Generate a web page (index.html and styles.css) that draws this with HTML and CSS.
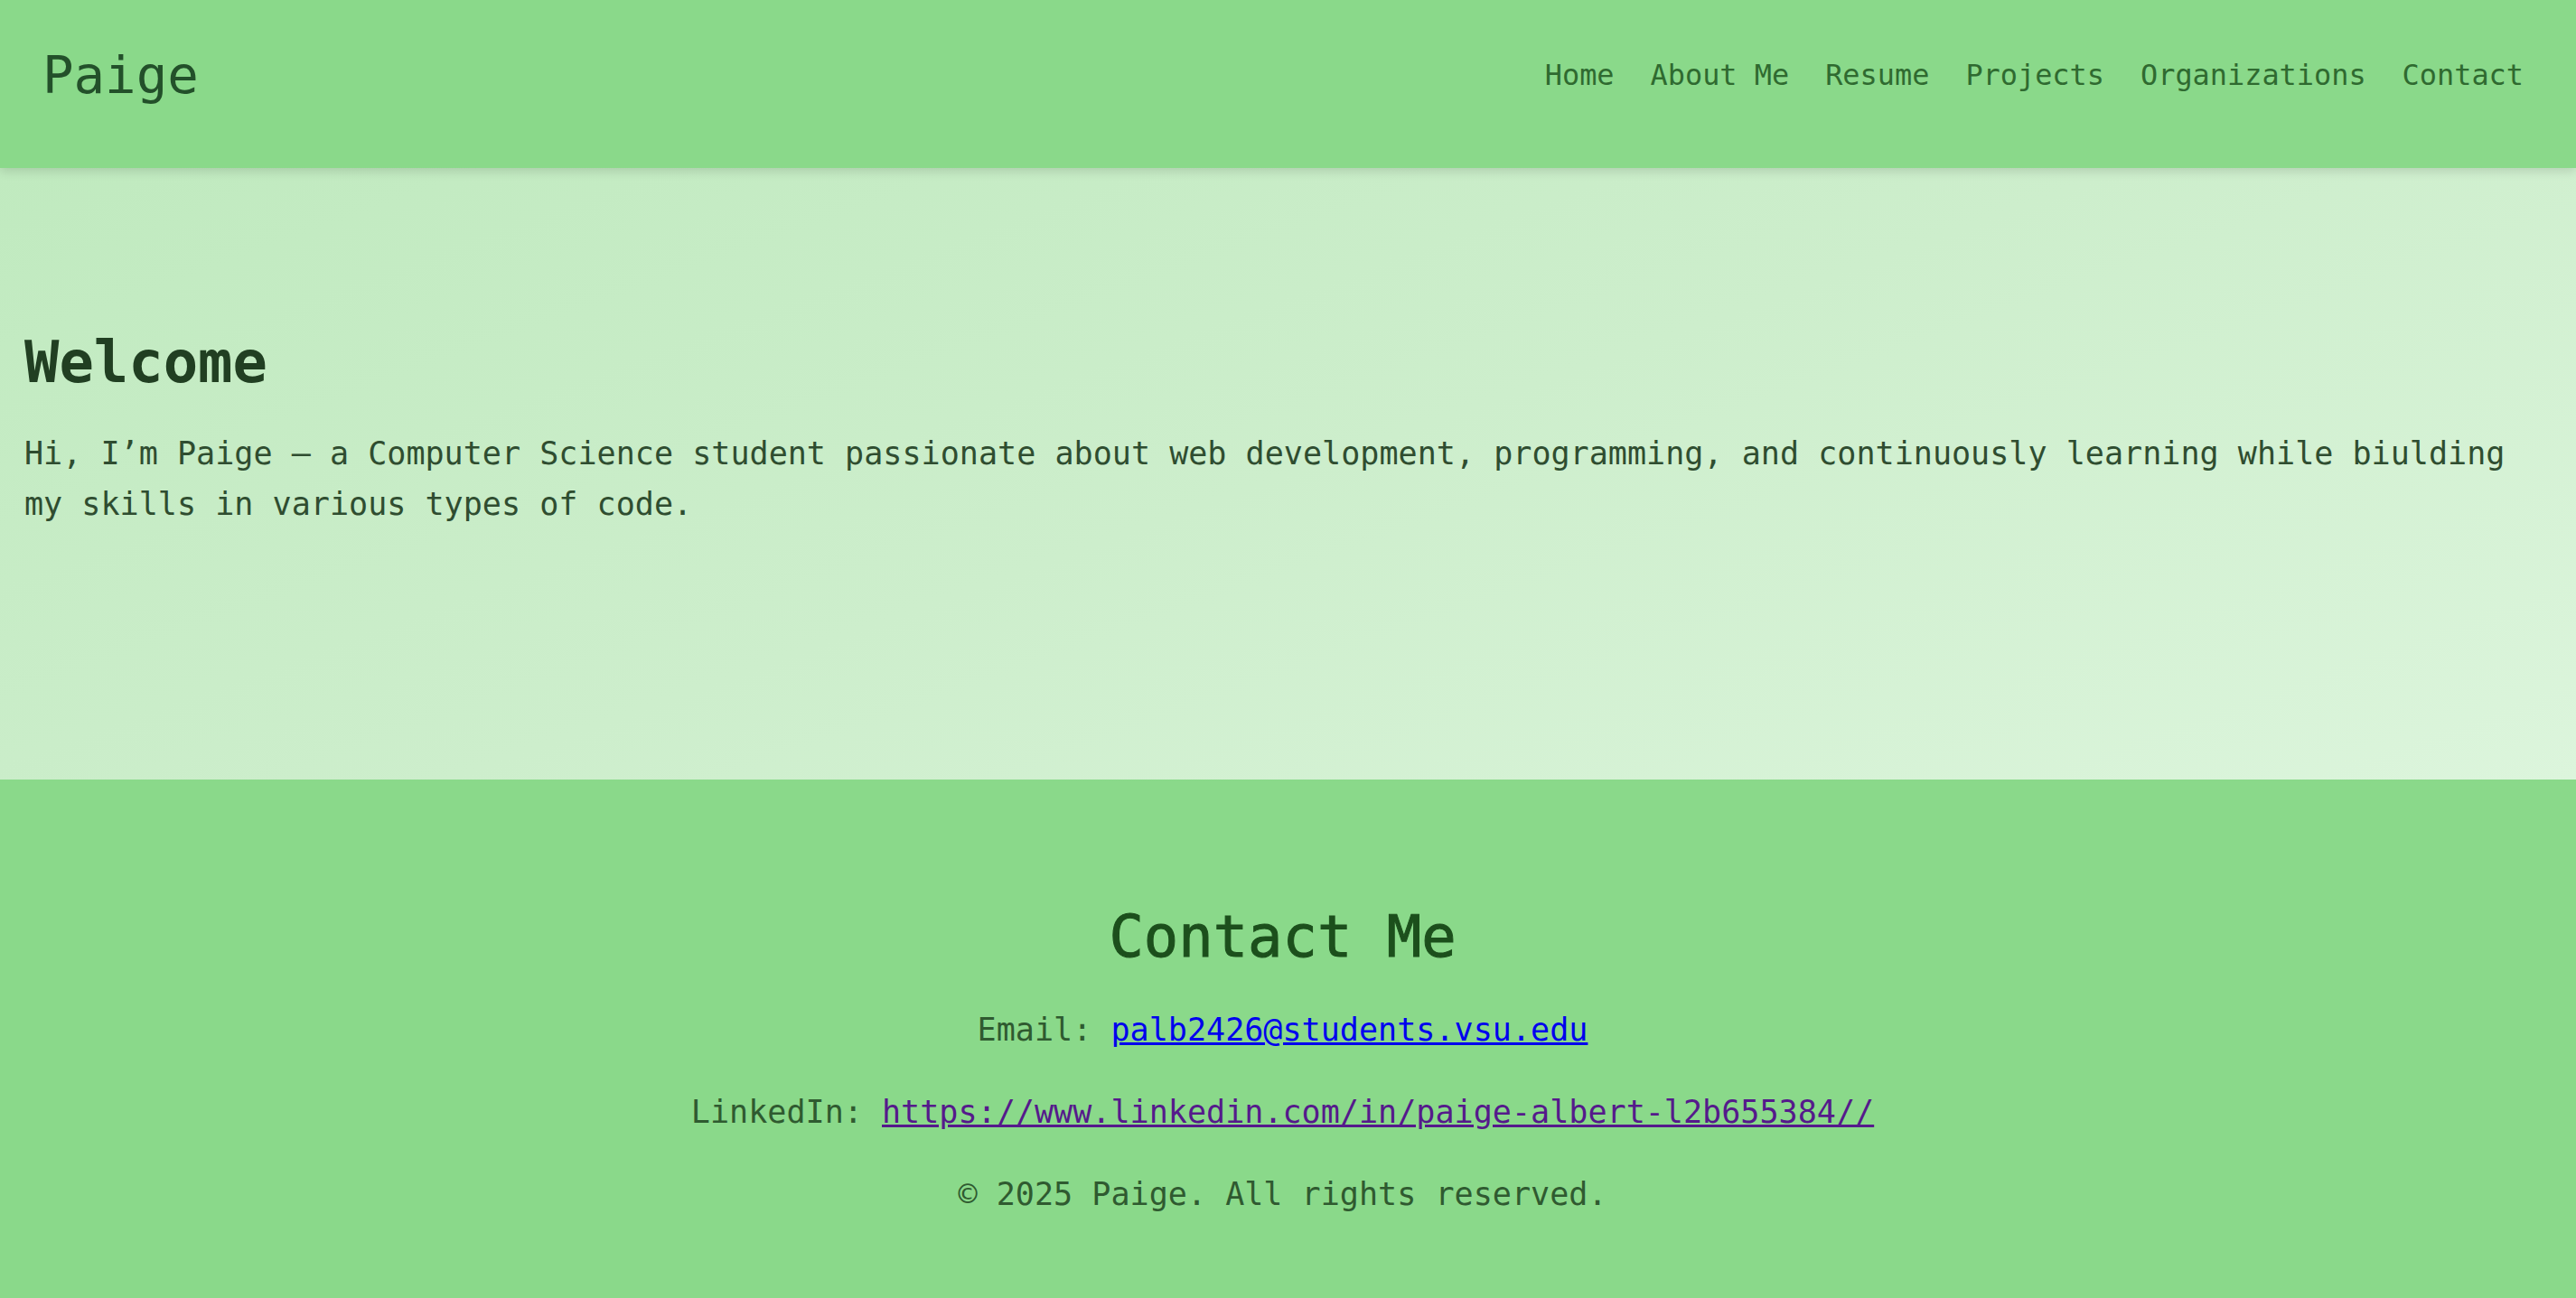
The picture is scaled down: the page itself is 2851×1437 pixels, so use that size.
FILE: index.html
```html
<!DOCTYPE html>
<html lang="en">
<head>
<meta charset="utf-8">
<title>Paige</title>
<link rel="stylesheet" href="styles.css">
</head>
<body>
<header class="site-header">
  <div class="logo">Paige</div>
  <nav class="nav">
    <a class="nav-link" href="#">Home</a>
    <a class="nav-link" href="#">About Me</a>
    <a class="nav-link" href="#">Resume</a>
    <a class="nav-link" href="#">Projects</a>
    <a class="nav-link" href="#">Organizations</a>
    <a class="nav-link" href="#">Contact</a>
  </nav>
</header>
<main class="hero">
  <h1 class="hero-title">Welcome</h1>
  <p class="hero-text">Hi, I’m Paige – a Computer Science student passionate about web development, programming, and continuously learning while biulding my skills in various types of code.</p>
</main>
<footer class="footer">
  <h2 class="footer-title">Contact Me</h2>
  <p class="footer-line">Email: <a class="link" href="#">palb2426@students.vsu.edu</a></p>
  <p class="footer-line">LinkedIn: <a class="link link-visited" href="#">https://www.linkedin.com/in/paige-albert-l2b655384//</a></p>
  <p class="footer-line">© 2025 Paige. All rights reserved.</p>
</footer>
</body>
</html>
```
FILE: styles.css
```css
html, body {
  margin: 0;
  padding: 0;
}
body {
  font-family: "DejaVu Sans Mono", monospace;
  background: #8ad98a;
  color: #2b4d2b;
}
.site-header {
  position: relative;
  z-index: 2;
  display: flex;
  align-items: center;
  justify-content: space-between;
  height: 186px;
  box-sizing: border-box;
  padding: 0 58px 20px 47px;
  background: #8ad98a;
  box-shadow: 0 4px 10px rgba(0, 0, 0, 0.12);
}
.logo {
  font-size: 57.4px;
  color: #23502a;
}
.nav {
  display: flex;
  gap: 40px;
}
.nav-link {
  font-size: 31.9px;
  color: #2f6a30;
  text-decoration: none;
}
.hero {
  display: block;
  height: 677px;
  box-sizing: border-box;
  padding: 178px 24px 0 27px;
  background: linear-gradient(160deg, #c0eabf 0%, #cdeecc 50%, #dcf5dc 100%);
}
.hero-title {
  margin: 0 0 36px;
  font-size: 63.8px;
  font-weight: bold;
  color: #213f22;
}
.hero-text {
  margin: 0;
  font-size: 35.08px;
  line-height: 1.6;
  color: #2f4d30;
}
.footer {
  padding: 137px 36px 100px 24px;
  text-align: center;
  background: #8ad98a;
}
.footer-title {
  margin: 0 0 38px;
  font-size: 63.8px;
  font-weight: normal;
  -webkit-text-stroke: 1px #1c4f1c;
  color: #1c4f1c;
}
.footer-line {
  margin: 35px 0 0;
  font-size: 35.08px;
  line-height: 1.6;
  color: #2f5a30;
}
.footer-title + .footer-line {
  margin-top: 0;
}
.link {
  color: #0000ee;
}
.link-visited {
  color: #551a8b;
}
```
